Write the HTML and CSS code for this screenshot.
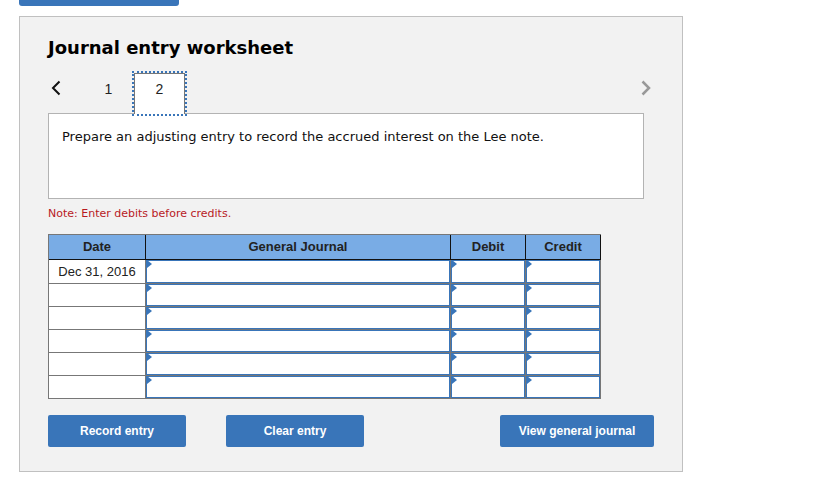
FILE: index.html
```html
<!DOCTYPE html>
<html lang="en">
<head>
    <meta charset="UTF-8">
    <meta name="viewport" content="width=device-width, initial-scale=1.0">
    <title>Journal entry worksheet</title>
    <link rel="stylesheet" href="styles.css">
</head>
<body>
    <div class="top-bar"></div>
    <main class="worksheet">
        <h1>Journal entry worksheet</h1>

        <nav class="tabs">
            <button type="button" class="arrow" aria-label="Previous">
                <svg width="10" height="16" viewBox="0 0 10 16"><path d="M8.5 1.5 L2 8 L8.5 14.5" fill="none" stroke="#111" stroke-width="2"/></svg>
            </button>
            <button type="button" class="tab">1</button>
            <button type="button" class="tab active">2</button>
            <button type="button" class="arrow next" aria-label="Next">
                <svg width="10" height="16" viewBox="0 0 10 16"><path d="M1.5 1.5 L8 8 L1.5 14.5" fill="none" stroke="#999" stroke-width="2.5"/></svg>
            </button>
        </nav>

        <div class="question">Prepare an adjusting entry to record the accrued interest on the Lee note.</div>
        <p class="note">Note: Enter debits before credits.</p>

        <table class="journal">
            <colgroup>
                <col class="col-date">
                <col>
                <col class="col-amount">
                <col class="col-amount">
            </colgroup>
            <thead>
                <tr>
                    <th>Date</th>
                    <th>General Journal</th>
                    <th>Debit</th>
                    <th>Credit</th>
                </tr>
            </thead>
            <tbody>
                <tr class="first">
                    <td>Dec 31, 2016</td>
                    <td class="entry"><input type="text" aria-label="Account, line 1"></td>
                    <td class="entry"><input type="text" aria-label="Debit, line 1"></td>
                    <td class="entry"><input type="text" aria-label="Credit, line 1"></td>
                </tr>
                <tr>
                    <td></td>
                    <td class="entry"><input type="text" aria-label="Account, line 2"></td>
                    <td class="entry"><input type="text" aria-label="Debit, line 2"></td>
                    <td class="entry"><input type="text" aria-label="Credit, line 2"></td>
                </tr>
                <tr>
                    <td></td>
                    <td class="entry"><input type="text" aria-label="Account, line 3"></td>
                    <td class="entry"><input type="text" aria-label="Debit, line 3"></td>
                    <td class="entry"><input type="text" aria-label="Credit, line 3"></td>
                </tr>
                <tr>
                    <td></td>
                    <td class="entry"><input type="text" aria-label="Account, line 4"></td>
                    <td class="entry"><input type="text" aria-label="Debit, line 4"></td>
                    <td class="entry"><input type="text" aria-label="Credit, line 4"></td>
                </tr>
                <tr>
                    <td></td>
                    <td class="entry"><input type="text" aria-label="Account, line 5"></td>
                    <td class="entry"><input type="text" aria-label="Debit, line 5"></td>
                    <td class="entry"><input type="text" aria-label="Credit, line 5"></td>
                </tr>
                <tr>
                    <td></td>
                    <td class="entry"><input type="text" aria-label="Account, line 6"></td>
                    <td class="entry"><input type="text" aria-label="Debit, line 6"></td>
                    <td class="entry"><input type="text" aria-label="Credit, line 6"></td>
                </tr>
            </tbody>
        </table>

        <div class="actions">
            <button type="button" class="btn">Record entry</button>
            <button type="button" class="btn">Clear entry</button>
            <button type="button" class="btn btn-view">View general journal</button>
        </div>
    </main>
</body>
</html>
```

FILE: styles.css
```css
* {
    box-sizing: border-box;
}
body {
    margin: 0;
    padding: 0 19px;
    background-color: #fff;
    font-family: Verdana, "DejaVu Sans", sans-serif;
    font-size: 13px;
    color: #111;
}
button {
    font-family: Arial, "Liberation Sans", sans-serif;
    cursor: pointer;
}
.top-bar {
    width: 160px;
    height: 6px;
    margin-bottom: 10px;
    background-color: #3975b9;
    border-radius: 0 0 3px 3px;
}
.worksheet {
    max-width: 664px;
    padding: 20px 28px 24px;
    background-color: #f2f2f2;
    border: 1px solid #c0c0c0;
}
h1 {
    margin: 0;
    font-size: 18px;
    line-height: 22px;
    color: #000;
}

/* tabs */
.tabs {
    display: flex;
    align-items: center;
    height: 40px;
    margin-top: 14px;
    padding-right: 3px;
}
.arrow {
    display: flex;
    padding: 0;
    margin: 0 22px 10px 3px;
    background: none;
    border: none;
}
.arrow.next {
    margin: 0 0 10px auto;
}
.tab {
    align-self: flex-start;
    width: 51px;
    height: 41px;
    padding: 0 0 10px;
    background: none;
    border: 1px solid transparent;
    border-bottom: none;
    font-size: 14px;
    color: #222;
}
.tab.active {
    position: relative;
    z-index: 1;
    background-color: #fff;
    border-color: #777;
    outline: 2px dotted #3975b9;
}

.question {
    min-height: 86px;
    margin-right: 10px;
    padding: 14px 13px;
    background-color: #fff;
    border: 1px solid #b3b3b3;
    line-height: 18px;
}
.note {
    margin: 7px 0 13px;
    font-size: 11px;
    line-height: 15px;
    color: #b8191f;
}

/* journal table */
.journal {
    width: 553px;
    max-width: 100%;
    table-layout: fixed;
    border-collapse: separate;
    border-spacing: 0;
    border: 1px solid #777;
    border-width: 1px 0 0 1px;
    font-family: Arial, "Liberation Sans", sans-serif;
    font-size: 13px;
    text-align: center;
    color: #222;
}
.col-date {
    width: 97px;
}
.col-amount {
    width: 75px;
}
.journal th {
    height: 25px;
    padding: 0 0 2px;
    background-color: #79ace5;
    border: 1px solid #111;
    border-width: 0 1px 1px 0;
}
.journal td {
    height: 23px;
    padding: 0;
    background-color: #fff;
    border: 1px solid #777;
    border-width: 0 1px 1px 0;
}
.journal .first td {
    height: 24px;
}
.journal .entry {
    position: relative;
}
.entry input {
    display: block;
    width: 100%;
    height: 22px;
    padding: 0 8px;
    border: 1px solid #3975b9;
    border-radius: 0;
    font: inherit;
}
.first .entry input {
    height: 23px;
}
.entry::before {
    content: "";
    position: absolute;
    top: 0;
    left: 1px;
    border: solid transparent;
    border-width: 4px 0 4px 5px;
    border-left-color: #3975b9;
}

.actions {
    display: flex;
    gap: 40px;
    margin-top: 16px;
}
.btn {
    width: 138px;
    height: 32px;
    padding: 0;
    background-color: #3975b9;
    border: none;
    border-radius: 2px;
    color: #fff;
    font-size: 12px;
    font-weight: bold;
}
.btn-view {
    width: 154px;
    margin-left: auto;
}
```
